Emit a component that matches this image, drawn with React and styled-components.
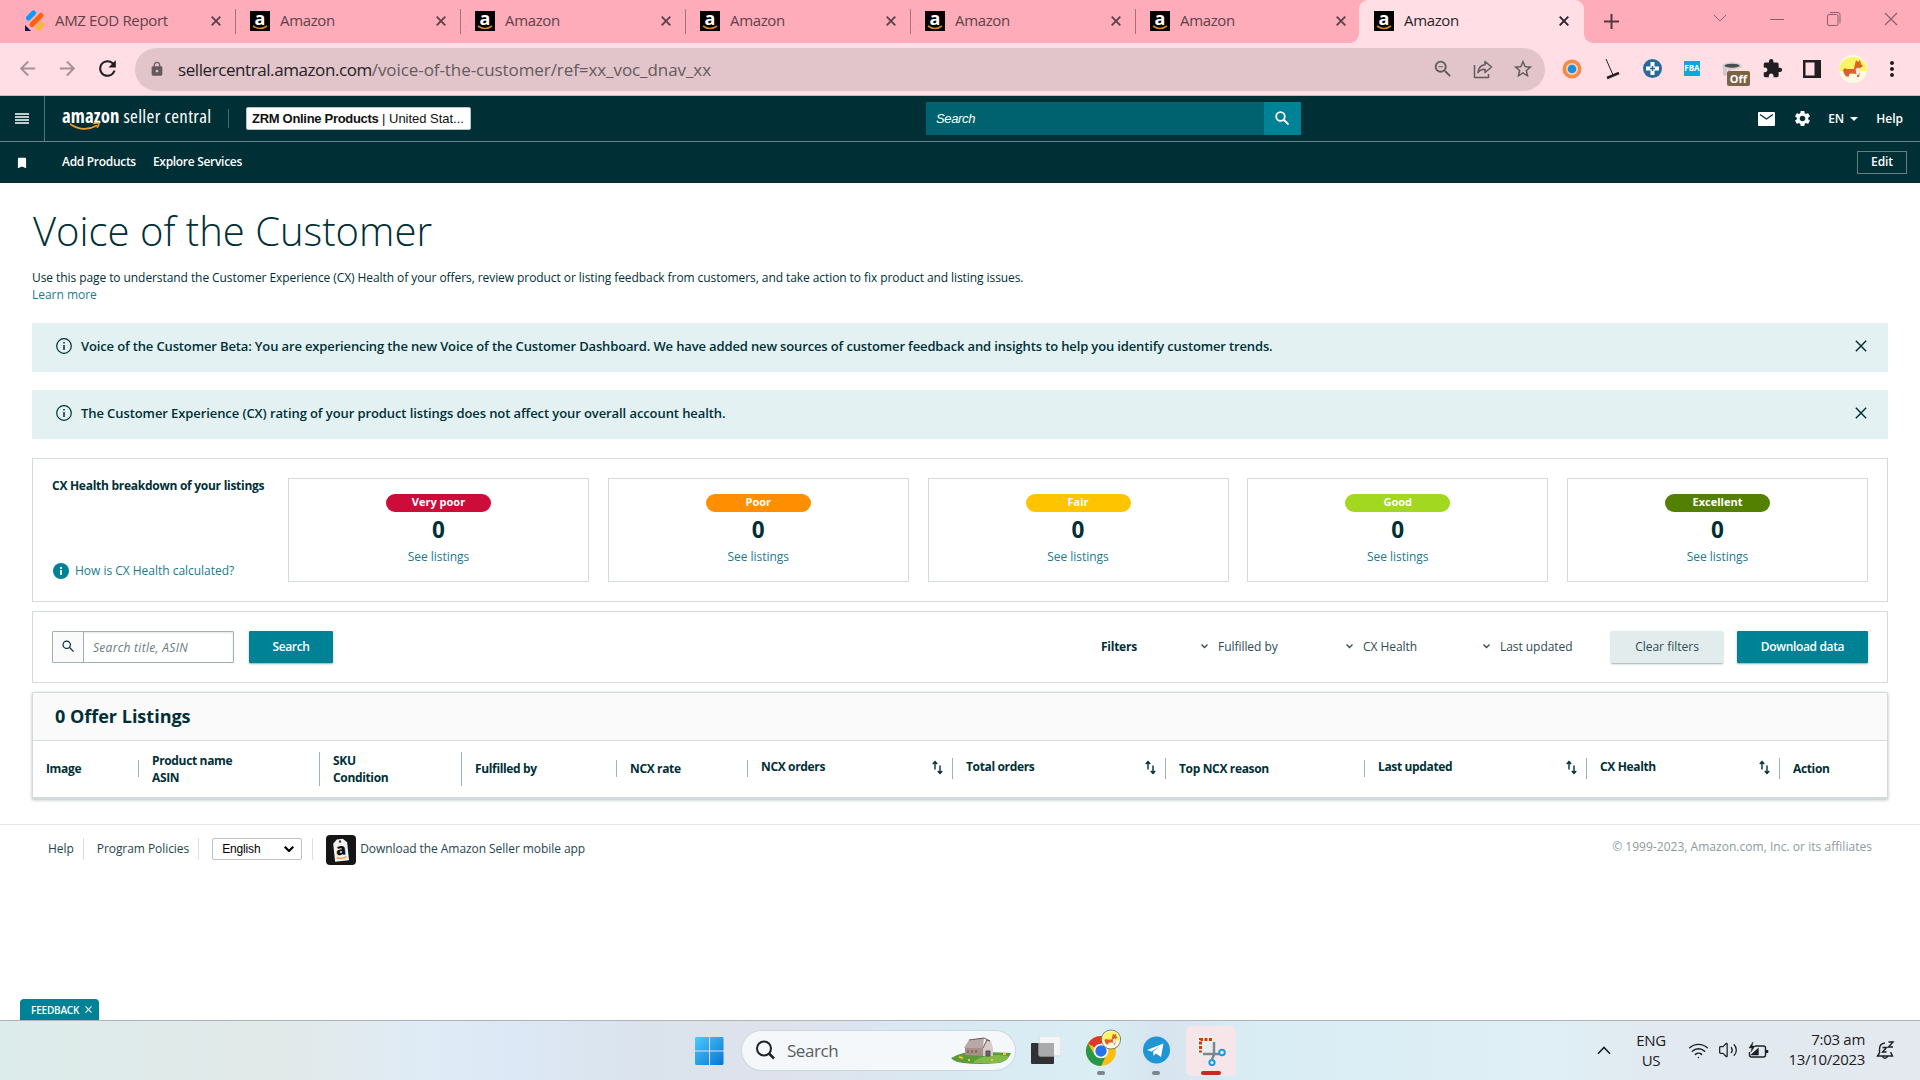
import React from "react";
import styled, { createGlobalStyle } from "styled-components";
import { Wifi, Volume2 } from "lucide-react";
import { MdLock, MdZoomOut, MdStarBorder, MdExtension, MdMoreVert, MdSettings, MdBookmark, MdRefresh, MdArrowBack, MdArrowForward } from "react-icons/md";

const GlobalStyle = createGlobalStyle`
	* {
		box-sizing: border-box;
	}

	body {
		margin: 0;
		background: #fff;
		color: #002f36;
		font-family: "Open Sans", "Noto Sans", sans-serif;
		font-size: 12px;
		overflow: hidden;
	}

	svg {
		display: block;
		flex: none;
	}
`;

const Screen = styled.div`
	display: flex;
	flex-direction: column;
	width: 1920px;
	height: 1080px;
`;

/* ---------- browser ---------- */

const TabStrip = styled.div`
	display: flex;
	height: 43px;
	padding-left: 10px;
	background: #ffacba;
`;

const TabItem = styled.div`
	display: flex;
	align-items: center;
	width: 225px;
	height: 43px;
	padding: 0 14px 2px 15px;
	position: relative;
	color: #5c4349;

	&::after {
		content: "";
		display: ${p => (p.$last ? "none" : "block")};
		position: absolute;
		right: -1px;
		top: 9px;
		width: 1px;
		height: 25px;
		background: #a5727c;
	}
`;

const ActiveTab = styled(TabItem)`
	background: #ffdfe5;
	border-radius: 9px 9px 0 0;
	color: #2b2327;
	margin-left: -1px;
	padding-right: 15px;

	&::before,
	&::after {
		content: "";
		display: block;
		position: absolute;
		top: auto;
		bottom: 0;
		width: 9px;
		height: 9px;
	}

	&::before {
		left: -9px;
		background: radial-gradient(circle at 0 0, transparent 8.5px, #ffdfe5 9px);
	}

	&::after {
		right: -9px;
		background: radial-gradient(circle at 100% 0, transparent 8.5px, #ffdfe5 9px);
	}
`;

const TabTitle = styled.span`
	flex: 1;
	margin-left: 10px;
	padding-bottom: 2px;
	font-size: 15px;
	letter-spacing: -0.35px;
`;

const Favicon = styled.div`
	width: 20px;
	height: 20px;
	background: #000;
	color: #fff;
	position: relative;
	font-weight: 700;
	font-size: 18px;
	line-height: 14px;
	text-align: center;

	svg {
		position: absolute;
		left: 2px;
		bottom: 1px;
	}
`;

const NewTab = styled.div`
	display: flex;
	align-items: center;
	padding-left: 20px;
	color: #54383f;
`;

const WindowButtons = styled.div`
	display: flex;
	align-items: center;
	gap: 43px;
	margin-left: auto;
	padding: 0 22px 6px 0;
	color: #8c5e68;
`;

const Toolbar = styled.div`
	display: flex;
	align-items: center;
	height: 53px;
	background: #ffdfe5;
	border-bottom: 1px solid #d2b8bd;
	color: #1f1f22;
`;

const NavButtons = styled.div`
	display: flex;
	align-items: center;
	justify-content: space-between;
	width: 135px;
	padding: 0 15px 2px 16px;
`;

const AddressBar = styled.div`
	display: flex;
	align-items: center;
	width: 1410px;
	height: 43px;
	padding: 0 11px 0 14px;
	border-radius: 22px;
	background: #e1c5ca;
	color: #65595d;
`;

const Url = styled.div`
	flex: 1;
	margin-left: 13px;
	font-size: 17px;
	letter-spacing: -0.075px;
	color: #655a5e;
`;

const Domain = styled.span`
	color: #252125;
	letter-spacing: -0.42px;
`;

const AddressIcons = styled.div`
	display: flex;
	align-items: center;
	gap: 19px;
`;

const Extensions = styled.div`
	display: flex;
	align-items: center;
	flex: 1;
	padding: 0 0 1px 18px;
`;

const ExtSlot = styled.div`
	display: flex;
	justify-content: center;
	position: relative;
	width: 40px;
	margin-left: ${p => p.$shift || 0}px;
`;

const FbaBadge = styled.div`
	width: 16px;
	height: 15px;
	background: #0ea5e0;
	color: #fff;
	font-size: 8px;
	font-weight: 700;
	line-height: 13px;
	text-align: center;
`;

const OffBadge = styled.span`
	position: absolute;
	left: 15px;
	top: 9px;
	width: 23px;
	height: 15px;
	border-radius: 2px;
	background: #7d6344;
	color: #fff;
	font-size: 11px;
	font-weight: 700;
	line-height: 15px;
	text-align: center;
`;

/* ---------- seller central header ---------- */

const Header = styled.header`
	background: #002f36;
	color: #fff;
`;

const HeaderRow = styled.div`
	display: flex;
	align-items: center;
	height: 46px;
	border-bottom: 1px solid #68868b;
`;

const MenuButton = styled.div`
	display: flex;
	align-items: center;
	width: 45px;
	height: 45px;
	padding-left: 15px;
	border-right: 1px solid #50737a;
`;

const Logo = styled.div`
	display: flex;
	width: 150px;
	margin-left: 17px;
	position: relative;
	font-size: 18.8px;
	font-stretch: 75%;
	line-height: 22px;
	white-space: nowrap;
	padding-bottom: 5px;

	svg {
		position: absolute;
		left: 7px;
		top: 17px;
	}
`;

const LogoBold = styled.b`
	letter-spacing: 0.1px;
	margin-right: 4px;
`;

const LogoLight = styled.span`
	letter-spacing: 0.34px;
`;

const HeaderRule = styled.div`
	width: 1px;
	height: 19px;
	margin: 0 17px 0 16px;
	background: #476a70;
`;

const StoreSelect = styled.div`
	width: 225px;
	height: 23px;
	padding-left: 5px;
	border: 1px solid #b5c4c6;
	border-radius: 2px;
	background: #fff;
	color: #111;
	font: 13px/21px "Liberation Sans", Arial, sans-serif;
	letter-spacing: -0.02px;
	white-space: nowrap;

	b {
		letter-spacing: -0.3px;
	}
`;

const HeaderSearch = styled.div`
	display: flex;
	width: 375px;
	height: 33px;
	margin-left: 455px;
	background: #00616f;
	font: italic 13px/33px "Liberation Sans", Arial, sans-serif;
	padding-left: 10px;
	letter-spacing: -0.35px;
`;

const HeaderSearchButton = styled.div`
	display: flex;
	align-items: center;
	justify-content: center;
	width: 37px;
	height: 33px;
	margin-left: auto;
	padding: 0 1px 1px 0;
	background: #008296;
`;

const HeaderTools = styled.div`
	display: flex;
	align-items: center;
	margin-left: auto;
	padding-right: 17px;
	font-weight: 600;
`;

const MailIcon = styled.svg`
	margin-right: 18px;
`;

const LanguageCode = styled.span`
	margin-left: 16px;
`;

const Caret = styled.i`
	border: 4px solid transparent;
	border-top-color: #fff;
	border-bottom: 0;
	margin: 1px 18px 0 6px;
`;

const Favorites = styled.nav`
	display: flex;
	align-items: center;
	height: 41px;
	padding: 0 13px 0 15px;
	font-weight: 600;
	letter-spacing: -0.3px;
`;

const FavLink = styled.a`
	margin-left: ${p => p.$gap}px;
	padding-bottom: 2px;
`;

const EditButton = styled.div`
	width: 50px;
	height: 23px;
	margin-left: auto;
	border: 1px solid #667f83;
	line-height: 20px;
	text-align: center;
	letter-spacing: -0.1px;
`;

/* ---------- page ---------- */

const Page = styled.main`
	flex: 1;
	display: flex;
	flex-direction: column;
`;

const Content = styled.div`
	width: 1856px;
	margin-left: 32px;
`;

const Title = styled.h1`
	margin: 18px 0 0 1px;
	font-size: 40px;
	font-weight: 300;
	line-height: 60px;
`;

const Description = styled.p`
	margin: 8px 0 20px;
	line-height: 17px;
	letter-spacing: -0.075px;
`;

const TextLink = styled.a`
	color: #217a8b;
	letter-spacing: -0.02px;
`;

const Alert = styled.div`
	display: flex;
	align-items: center;
	height: 49px;
	margin-bottom: 18px;
	padding: 0 21px 3px 24px;
	background: #e3f1f2;
	font-size: 13px;
	font-weight: 600;
	letter-spacing: ${p => p.$spacing}px;

	span {
		flex: 1;
		margin-left: 9px;
	}
`;

const Panels = styled.div`
	padding-top: 1px;
`;

const Panel = styled.section`
	display: flex;
	margin-bottom: 9px;
	border: 1px solid #d5dbdb;
	height: ${p => p.$height}px;
`;

const Summary = styled.div`
	display: flex;
	flex-direction: column;
	justify-content: space-between;
	width: 255px;
	padding: 18px 0 21px 19px;
	line-height: 18px;
`;

const SummaryTitle = styled.b`
	letter-spacing: -0.27px;
`;

const SummaryLink = styled.div`
	display: flex;
	align-items: center;
	gap: 6px;
	padding-left: 1px;
`;

const Cards = styled.div`
	flex: 1;
	display: grid;
	grid-template-columns: repeat(5, 301px);
	justify-content: space-between;
	padding: 19px 19px 0 0;
`;

const Card = styled.div`
	display: flex;
	flex-direction: column;
	align-items: center;
	height: 104px;
	padding-top: 15px;
	border: 1px solid #d5dbdb;
`;

const Pill = styled.div`
	width: 105px;
	height: 18px;
	border-radius: 9px;
	background: ${p => p.$color};
	color: #fff;
	font-size: 11px;
	font-weight: 700;
	line-height: 16px;
	text-align: center;
`;

const Count = styled.div`
	font-size: 22.5px;
	font-weight: 700;
	line-height: 30px;
	margin: 3px 0;
`;

const FilterRow = styled.div`
	flex: 1;
	display: flex;
	align-items: center;
	padding: 0 19px;
`;

const SearchField = styled.div`
	display: flex;
	width: 182px;
	height: 32px;
	border: 1px solid #9fb0b3;
	border-radius: 1px;
	color: #687b7e;
	font-style: italic;
	line-height: 32px;
	letter-spacing: 0.3px;
	white-space: nowrap;
	box-shadow: inset 0 1px 2px rgba(0, 47, 54, 0.12);
`;

const SearchAddon = styled.div`
	width: 31px;
	margin-right: 9px;
	padding: 8px 0 0 9px;
	border-right: 1px solid #9fb0b3;
	background: #fafafa;
	color: #002f36;
`;

const Button = styled.div`
	width: ${p => p.$width}px;
	height: 32px;
	margin-left: ${p => p.$gap}px;
	border-radius: 1px;
	background: ${p => (p.$primary ? "#008296" : "#e3eced")};
	color: ${p => (p.$primary ? "#fff" : "#2b4c53")};
	font-weight: ${p => (p.$primary ? 600 : 400)};
	line-height: 32px;
	letter-spacing: ${p => (p.$primary ? -0.35 : 0)}px;
	text-align: center;
	box-shadow: 0 1px 2px rgba(0, 47, 54, 0.4);
`;

const FilterLabel = styled.b`
	margin-left: auto;
	width: 100px;
	padding-bottom: 2px;
	letter-spacing: -0.25px;
`;

const Filter = styled.div`
	display: flex;
	align-items: center;
	gap: 10px;
	width: ${p => p.$width}px;
	padding-bottom: 1px;
	color: #2b4c53;
	letter-spacing: -0.05px;
`;

const Listings = styled.section`
	height: 107px;
	border: 1px solid #d5dbdb;
	border-bottom-width: 2px;
	box-shadow: 0 1px 3px rgba(0, 47, 54, 0.3);
`;

const ListingsTitle = styled.h2`
	height: 48px;
	margin: 0;
	padding-left: 22px;
	border-bottom: 1px solid #d5dbdb;
	background: #fafafa;
	font-size: 18px;
	font-weight: 700;
	line-height: 47px;
`;

const ColumnRow = styled.div`
	display: grid;
	grid-template-columns: 106px 181px 142px 155px 131px 205px 213px 199px 222px 193px 1fr;
	align-items: center;
	height: 55px;
`;

const Column = styled.div`
	display: flex;
	justify-content: space-between;
	height: ${p => (p.$sortable ? 21 : 17 * p.$lines)}px;
	padding: 0 9px 0 13px;
	border-right: ${p => (p.$last ? 0 : 1)}px solid #9fb0b3;
	font-weight: 700;
	line-height: 17px;
	letter-spacing: -0.35px;
	white-space: pre;
`;

const SortArrows = styled.svg`
	margin-top: 2px;
`;

/* ---------- page footer ---------- */

const Footer = styled.footer`
	display: flex;
	align-items: center;
	height: 49px;
	margin-top: 25px;
	padding: 0 48px 1px 48px;
	border-top: 1px solid #e7e7e7;
	letter-spacing: -0.06px;
	color: #1e464d;
`;

const FooterRule = styled.div`
	width: 1px;
	height: 22px;
	margin: 0 ${p => p.$right}px 0 ${p => p.$left}px;
	background: #dcdfdf;
`;

const LanguageSelect = styled.div`
	display: flex;
	align-items: center;
	justify-content: space-between;
	width: 90px;
	height: 22px;
	padding: 0 7px 0 9px;
	border: 1px solid #bfc2c2;
	border-radius: 2px;
	color: #000;
	font: 12px "Liberation Sans", Arial, sans-serif;
	letter-spacing: -0.15px;
`;

const AppIcon = styled.div`
	margin: 2px 4px 0 0;
`;

const Copyright = styled.span`
	margin-left: auto;
	padding-bottom: 4px;
	color: #8d9a9c;
	letter-spacing: 0.03px;
`;

const Feedback = styled.div`
	display: flex;
	align-items: center;
	gap: 6px;
	width: 79px;
	height: 21px;
	margin: auto 0 0 20px;
	padding: 1px 0 0 11px;
	border-radius: 4px 4px 0 0;
	background: #008296;
	color: #fff;
	font-size: 10px;
	font-weight: 600;
	letter-spacing: -0.2px;

	svg {
		margin-bottom: 2px;
	}
`;

/* ---------- taskbar ---------- */

const Taskbar = styled.div`
	display: flex;
	align-items: center;
	height: 60px;
	border-top: 1px solid #aeb4b8;
	background: linear-gradient(90deg, #dcecea 0, #e2e9e9 280px, #dfebf5 420px, #dce8f5 520px, #dae3ec 650px, #dfe2ed 780px, #d9e9f2 950px, #daeef4 1100px, #d8e4ef 1160px, #d9edf4 1260px, #dfeff5 1560px, #e2e9f0 1660px, #e3e9ef 1920px);
	color: #1d2022;
`;

const TaskIcons = styled.div`
	display: flex;
	align-items: center;
	height: 59px;
	margin-left: 695px;
`;

const TaskSearch = styled.div`
	display: flex;
	align-items: center;
	width: 273px;
	height: 39px;
	margin: 0 16px 0 18px;
	padding: 0 4px 0 13px;
	border-radius: 20px;
	background: #f4f8fb;
	box-shadow: 0 0 0 1px #cdd8df;
	color: #595d60;
	font-size: 17px;
	letter-spacing: -0.45px;

	span {
		flex: 1;
		margin-left: 12px;
		padding-bottom: 1px;
	}

	svg {
		margin-bottom: 1px;
	}
`;

const TaskItem = styled.div`
	display: flex;
	align-items: center;
	justify-content: center;
	position: relative;
	width: 50px;
	height: 50px;
	padding-bottom: 2px;
	margin-left: ${p => p.$gap}px;
	border-radius: 5px;
	background: ${p => (p.$active ? "#f6e5e9" : "none")};

	&::after {
		content: "";
		position: absolute;
		bottom: 1px;
		width: ${p => (p.$active ? 20 : 8)}px;
		height: 4px;
		border-radius: 2px;
		background: ${p => (p.$active ? "#c92a1e" : "#7d868c")};
	}
`;

const Tray = styled.div`
	display: flex;
	align-items: center;
	margin-left: auto;
	padding: 0 25px 1px 0;
	font-size: 15px;
	line-height: 20px;
	letter-spacing: -0.3px;
`;

const TrayLanguage = styled.div`
	width: 40px;
	margin: 0 17px 0 20px;
	padding-bottom: 1px;
	text-align: center;
`;

const TraySound = styled.div`
	margin: 0 10px 0 9px;
`;

const Clock = styled.div`
	width: 96px;
	margin-right: 11px;
	padding-bottom: 2px;
	text-align: right;
`;

/* ---------- drawings ---------- */

const Cross = ({ size, width = 1.5 }) => (
	<svg width={size} height={size} viewBox="0 0 10 10" stroke="currentColor" strokeWidth={width} fill="none">
		<path d="M.7.7l8.6 8.6M9.3.7L.7 9.3" />
	</svg>
);

const AmazonFavicon = () => (
	<Favicon>
		a
		<svg width="16" height="5" viewBox="0 0 16 5" fill="none" stroke="#d98618" strokeWidth="1.6">
			<path d="M1 1q7 5 14 0" />
		</svg>
	</Favicon>
);

const ReportFavicon = () => (
	<svg width="20" height="21" viewBox="0 0 20 21" strokeLinecap="round" strokeWidth="5">
		<path d="M3.500 8l5-5" stroke="#0a99ff" />
		<path d="M7 14.500L16 5.500" stroke="#ff6100" />
		<path d="M13.500 18l3-3" stroke="#ffb629" />
		<path d="M0 15v6h6z" fill="#0a1551" />
	</svg>
);

const Info = () => (
	<svg width="16" height="16" viewBox="0 0 16 16" fill="none" stroke="#002f36" strokeWidth="1.2">
		<circle cx="8" cy="8" r="7.300" />
		<path d="M8 7v5M8 4v1.500" strokeWidth="1.5" />
	</svg>
);

const InfoFilled = () => (
	<svg width="16" height="16" viewBox="0 0 16 16">
		<circle cx="8" cy="8" r="8" fill="#008296" />
		<path d="M8 7v5M8 4v2" stroke="#fff" strokeWidth="2" />
	</svg>
);

const SearchIcon = ({ size, width = 1.5 }) => (
	<svg width={size} height={size} viewBox="0 0 14 14" fill="none" stroke="currentColor" strokeWidth={width}>
		<circle cx="5.500" cy="5.500" r="4.300" />
		<path d="M8.500 8.500l5 5" />
	</svg>
);

const ChevronIcon = ({ width = 7, stroke = 1.3, up }) => (
	<svg width={width} height={width * 0.6} viewBox="0 0 10 6" fill="none" stroke="currentColor" strokeWidth={(stroke * 10) / width}>
		<path d={up ? "M.7 5.500L5 1l4.300 4.500" : "M.7.700L5 5 9.300.700"} />
	</svg>
);

const SortIcon = () => (
	<SortArrows width="11" height="15" viewBox="0 0 11 15" fill="none" stroke="#002f36" strokeWidth="1.4">
		<path d="M3 9.500V2M.8 4L3 1.500 5.200 4" />
		<path d="M8 5.500V13M5.800 11L8 13.500 10.200 11" />
	</SortArrows>
);

const ShareIcon = () => (
	<svg width="20" height="20" viewBox="0 0 20 20" fill="none" stroke="currentColor" strokeWidth="1.5" strokeLinejoin="round">
		<path d="M1.500 6v12.500h14V15" />
		<path d="M12 2.500l6.500 5.500-6.500 5.500v-3.300c-3.500 0-5.500 1-7 3.500.3-4.500 2.500-7.500 7-8z" />
	</svg>
);

const Corgi = ({ size }) => (
	<svg width={size} height={size} viewBox="0 0 28 28">
		<circle cx="14" cy="14" r="14" fill="#fcfbe3" />
		<path d="M0 16A14 14 0 0 1 28 16z" fill="#fbf566" />
		<path d="M4 15l2-2 2 1h7l1-5 1-4 2 2 2-2 1 4 2 2-3 2v5l-1 4h-2v-3l-6-.5-2 1v2H7l-2-3z" fill="#d9632a" />
		<path d="M17 14l3-1 1 3-1 3-2 1zM7 22.500h3M17 22.500h3" fill="#fbeee2" stroke="#fbeee2" strokeWidth=".8" />
	</svg>
);

const WindowsLogo = () => (
	<svg width="29" height="30" viewBox="0 0 30 30">
		<defs>
			<linearGradient id="win" x1="0" y1="0" x2="1" y2="1">
				<stop offset="0" stopColor="#4ccbfb" />
				<stop offset="1" stopColor="#0873d4" />
			</linearGradient>
		</defs>
		<path d="M0 2q0-1.500 1.500-1.500H14.500v14H0zM15.500.5H28q1.500 0 1.500 1.500v12.500h-14zM0 15.500h14.500v14H1.500Q0 29.500 0 28zM15.500 15.500h14V28q0 1.500-1.500 1.500H15.500z" fill="url(#win)" />
	</svg>
);

const Barn = () => (
	<svg width="60" height="27" viewBox="0 0 60 27">
		<path d="M0 21q14-8 36-6l24 1q-3 8-12 10-20 2-36 0Q3 25 0 21z" fill="#5c9b37" />
		<path d="M22 26q4-7 26-8l10 1q-4 6-12 7z" fill="#82b94a" />
		<path d="M14 11h19v8l-19-1z" fill="#a98e87" />
		<path d="M13 11l5-8 15-2-1 10z" fill="#b9a9a6" />
		<path d="M32 11l3-9 5 2 2 7v8h-10z" fill="#d7ccc8" />
		<path d="M18 3l15-2 6 3-3-1-4 8" fill="none" stroke="#6a5a5c" />
		<path d="M35 14h4v5h-4zM17 13v3M21 13v3M25 13v3" fill="#5d6a70" stroke="#5e484b" />
		<path d="M8 20l4 1M17 23h2M40 23h2M52 17h3" stroke="#f3c437" strokeWidth="2" />
	</svg>
);

const TaskView = () => (
	<svg width="30" height="29" viewBox="0 0 30 29">
		<rect y="7" width="23" height="21" rx="1" fill="#303133" />
		<rect x="8" y="0" width="22" height="20" rx="1" fill="#f3f5f6" stroke="#d4d9dc" />
		<rect x="8" y="7" width="15" height="13" fill="#a8aaab" />
	</svg>
);

const ChromeLogo = () => (
	<svg width="40" height="42" viewBox="0 0 40 42">
		<circle cx="20" cy="22" r="15" fill="#fbbf12" />
		<path d="M20 22L7 14.500A15 15 0 0 1 33 14.500H20z" fill="#dc3a2d" />
		<path d="M20 37A15 15 0 0 1 7 14.500l6.500 11.200L20 29l4 0z" fill="#27974a" />
		<circle cx="20" cy="22" r="7.300" fill="#fff" />
		<circle cx="20" cy="22" r="5.700" fill="#2773e8" />
		<circle cx="30" cy="10.500" r="10" fill="#77735a" />
		<svg x="20.800" y="1.300" width="18.400" height="18.400" viewBox="0 0 28 28"><Corgi size={28} /></svg>
	</svg>
);

const Telegram = () => (
	<svg width="28" height="28" viewBox="0 0 28 28">
		<circle cx="14.500" cy="14" r="13.500" fill="#1f95d4" />
		<path d="M5 14L21.500 7.500 19 21l-5-3.500-2.500 2.300-.3-4.300L18 10l-8.500 5.500z" fill="#fff" />
	</svg>
);

const Snip = () => (
	<svg width="30" height="32" viewBox="0 0 30 32" fill="none">
		<rect x="0" y="2" width="21" height="21" rx="2" fill="#e9edf0" />
		<path d="M16 5.500H4.500V18.500" stroke="#d83b01" strokeWidth="3" strokeDasharray="3 1.5" />
		<path d="M18 8v13l-2 4M7 20h16" stroke="#7f878c" strokeWidth="2.5" />
		<circle cx="26" cy="18.500" r="2.800" stroke="#1b9de2" strokeWidth="2" />
		<circle cx="16" cy="28.500" r="2.600" stroke="#1b9de2" strokeWidth="2" />
	</svg>
);

/* ---------- data ---------- */

const ratings = [
	{ label: "Very poor", color: "#cc0c39" },
	{ label: "Poor", color: "#ff8f00" },
	{ label: "Fair", color: "#ffc400" },
	{ label: "Good", color: "#a2d81f" },
	{ label: "Excellent", color: "#538000" },
];

const filters = [
	{ label: "Fulfilled by", width: 145 },
	{ label: "CX Health", width: 137 },
	{ label: "Last updated", width: 128 },
];

const columns = [
	{ label: "Image" },
	{ label: "Product name\nASIN", lines: 2 },
	{ label: "SKU\nCondition", lines: 2 },
	{ label: "Fulfilled by" },
	{ label: "NCX rate" },
	{ label: "NCX orders", sortable: true },
	{ label: "Total orders", sortable: true },
	{ label: "Top NCX reason" },
	{ label: "Last updated", sortable: true },
	{ label: "CX Health", sortable: true },
	{ label: "Action" },
];

const Browser = () => (
	<>
		<TabStrip>
			<TabItem>
				<ReportFavicon />
				<TabTitle>AMZ EOD Report</TabTitle>
				<Cross size={10} width={1.9} />
			</TabItem>
			{[1, 2, 3, 4, 5].map(i => (
				<TabItem key={i} $last={i === 5}>
					<AmazonFavicon />
					<TabTitle>Amazon</TabTitle>
					<Cross size={10} width={1.9} />
				</TabItem>
			))}
			<ActiveTab>
				<AmazonFavicon />
				<TabTitle>Amazon</TabTitle>
				<Cross size={10} width={1.9} />
			</ActiveTab>
			<NewTab>
				<svg width="15" height="15" viewBox="0 0 15 15" stroke="currentColor" strokeWidth="2"><path d="M7.500 0v15M0 7.500h15" /></svg>
			</NewTab>
			<WindowButtons>
				<ChevronIcon width={14} stroke={1} />
				<svg width="14" height="14" stroke="currentColor"><path d="M0 7.500h14" /></svg>
				<svg width="14" height="14" fill="none" stroke="currentColor">
					<rect x=".5" y="2.500" width="10.500" height="11" rx="1.500" />
					<path d="M3 .5h8q2 0 2 2v9" />
				</svg>
				<Cross size={14} width={0.8} />
			</WindowButtons>
		</TabStrip>
		<Toolbar>
			<NavButtons>
				<MdArrowBack size={23} color="#a58f94" />
				<MdArrowForward size={23} color="#a58f94" />
				<MdRefresh size={25} />
			</NavButtons>
			<AddressBar>
				<MdLock size={16} />
				<Url><Domain>sellercentral.amazon.com</Domain>/voice-of-the-customer/ref=xx_voc_dnav_xx</Url>
				<AddressIcons>
					<MdZoomOut size={22} />
					<ShareIcon />
					<MdStarBorder size={22} />
				</AddressIcons>
			</AddressBar>
			<Extensions>
				<ExtSlot $shift={-11}>
					<svg width="20" height="20" viewBox="0 0 20 20">
						<circle cx="10" cy="10" r="9.500" fill="#f58a45" />
						<circle cx="10" cy="10" r="6" fill="#f7d4b8" />
						<circle cx="10" cy="10" r="4.300" fill="#1e8fe0" />
					</svg>
				</ExtSlot>
				<ExtSlot>
					<svg width="16" height="22" viewBox="0 0 16 22" stroke="#222">
						<path d="M2 1l7 16" />
						<path d="M3 20l12-5" strokeWidth="2.5" />
					</svg>
				</ExtSlot>
				<ExtSlot>
					<svg width="19" height="19" viewBox="0 0 19 19">
						<circle cx="9.500" cy="9.500" r="9.500" fill="#286b9a" />
						<path d="M7.500 3h4v4.500H16v4h-4.500V16h-4v-4.500H3v-4h4.500z" fill="#fff" />
						<path d="M9.500 7v5M7 9.500h5" stroke="#286b9a" strokeWidth="1.5" />
					</svg>
				</ExtSlot>
				<ExtSlot><FbaBadge>FBA</FbaBadge></ExtSlot>
				<ExtSlot>
					<svg width="20" height="14" viewBox="0 0 20 14">
						<path d="M2 5v8h2V6M7 6v6" stroke="#b8b0b2" fill="none" />
						<ellipse cx="10" cy="4" rx="10" ry="3.700" fill="#cfcdce" />
						<ellipse cx="10" cy="3.700" rx="7.500" ry="2" fill="#4b4c50" />
					</svg>
					<OffBadge>Off</OffBadge>
				</ExtSlot>
				<ExtSlot><MdExtension size={21} /></ExtSlot>
				<ExtSlot>
					<svg width="18" height="18" viewBox="0 0 18 18">
						<path d="M0 0h18v18H0zM2.500 2.500v13h9v-13z" fill="currentColor" fillRule="evenodd" />
					</svg>
				</ExtSlot>
				<ExtSlot $shift={1}><Corgi size={28} /></ExtSlot>
				<ExtSlot $shift={-1}><MdMoreVert size={24} /></ExtSlot>
			</Extensions>
		</Toolbar>
	</>
);

const SellerHeader = () => (
	<Header>
		<HeaderRow>
			<MenuButton>
				<svg width="14" height="11" viewBox="0 0 14 11" stroke="#fff" strokeWidth="1.3"><path d="M0 1h14M0 4h14M0 7h14M0 10h14" /></svg>
			</MenuButton>
			<Logo>
				<LogoBold>amazon</LogoBold>
				<LogoLight>seller central</LogoLight>
				<svg width="32" height="9" viewBox="0 0 32 9" fill="none" stroke="#f29a2e" strokeWidth="1.6">
					<path d="M1 2q13 9 27 1.500M24 1.500q5-1 6-.3 0 2-2 4.500" />
				</svg>
			</Logo>
			<HeaderRule />
			<StoreSelect><b>ZRM Online Products</b> | United Stat...</StoreSelect>
			<HeaderSearch>
				Search
				<HeaderSearchButton><SearchIcon size={14} width={1.8} /></HeaderSearchButton>
			</HeaderSearch>
			<HeaderTools>
				<MailIcon width="17" height="14" viewBox="0 0 17 14">
					<rect width="17" height="14" rx="1" fill="#fff" />
					<path d="M2 2.500l6.500 4.500L15 2.500" fill="none" stroke="#002f36" strokeWidth="1.3" />
				</MailIcon>
				<MdSettings size={19} />
				<LanguageCode>EN</LanguageCode>
				<Caret />
				Help
			</HeaderTools>
		</HeaderRow>
		<Favorites>
			<MdBookmark size={14} />
			<FavLink $gap={33}>Add Products</FavLink>
			<FavLink $gap={17}>Explore Services</FavLink>
			<EditButton>Edit</EditButton>
		</Favorites>
	</Header>
);

const SellerFooter = () => (
	<Footer>
		<span>Help</span>
		<FooterRule $left={9} $right={13} />
		<span>Program Policies</span>
		<FooterRule $left={9} $right={13} />
		<LanguageSelect>English <ChevronIcon width={10} stroke={2.2} /></LanguageSelect>
		<FooterRule $left={10} $right={13} />
		<AppIcon>
			<svg width="30" height="30" viewBox="0 0 30 30">
				<rect width="30" height="30" rx="4" fill="#151515" />
				<g transform="rotate(-6 15 16)">
					<path d="M8 8l4-4h6l4 4v18H8z" fill="#f2f2f2" />
					<circle cx="15" cy="6.500" r="1.200" fill="#333" />
					<path d="M10 22q5 3 10 0" fill="none" stroke="#f7a63e" strokeWidth="1.5" />
					<text x="15" y="20" textAnchor="middle" fontSize="16" fontWeight="800" fill="#111">a</text>
				</g>
			</svg>
		</AppIcon>
		<span>Download the Amazon Seller mobile app</span>
		<Copyright>© 1999-2023, Amazon.com, Inc. or its affiliates</Copyright>
	</Footer>
);

const WindowsTaskbar = () => (
	<Taskbar>
		<TaskIcons>
			<WindowsLogo />
			<TaskSearch>
				<svg width="20" height="20" viewBox="0 0 20 20" fill="none" stroke="#222" strokeWidth="2">
					<circle cx="9" cy="8.500" r="7" />
					<path d="M14 13.500l5 5" strokeWidth="2.5" />
				</svg>
				<span>Search</span>
				<Barn />
			</TaskSearch>
			<TaskView />
			<TaskItem $gap={15}><ChromeLogo /></TaskItem>
			<TaskItem $gap={5}><Telegram /></TaskItem>
			<TaskItem $gap={5} $active><Snip /></TaskItem>
		</TaskIcons>
		<Tray>
			<ChevronIcon width={14} stroke={1.6} up />
			<TrayLanguage>ENG US</TrayLanguage>
			<Wifi size={21} strokeWidth={1.7} />
			<TraySound><Volume2 size={20} strokeWidth={1.5} /></TraySound>
			<svg width="21" height="17" viewBox="0 0 21 17" fill="none" stroke="#1d2022" strokeWidth="1.4">
				<path d="M7 4h8.500q2 0 2 2v7q0 2-2 2h-12q-2 0-2-2v-3" />
				<path d="M4 12.500L10 7v5.500z" fill="#1d2022" />
				<path d="M19 8v3" strokeWidth="2.5" />
				<path d="M5 0L1 6h3L3 10l4-6H4z" fill="#1d2022" strokeWidth=".5" />
			</svg>
			<Clock>7:03 am 13/10/2023</Clock>
			<svg width="19" height="19" viewBox="0 0 19 19" fill="none" stroke="#1d2022" strokeWidth="1.4">
				<path d="M9 2Q3.500 2.500 3.500 8v4L1.500 15h15l-1.500-3v-1M6.500 15.500q2 3.500 5 0" />
				<path d="M6.500 6.500h4l-4 4.500h4M12.500 1h4.500l-4.500 5H17" />
			</svg>
		</Tray>
	</Taskbar>
);

const App = () => {
	return (
		<Screen>
			<GlobalStyle />
			<Browser />
			<SellerHeader />
			<Page>
				<Content>
					<Title>Voice of the Customer</Title>
					<Description>
						Use this page to understand the Customer Experience (CX) Health of your offers, review product or listing feedback from customers, and take action to fix product and listing issues.
						<br />
						<TextLink>Learn more</TextLink>
					</Description>
					<Alert $spacing={-0.14}>
						<Info />
						<span>Voice of the Customer Beta: You are experiencing the new Voice of the Customer Dashboard. We have added new sources of customer feedback and insights to help you identify customer trends.</span>
						<Cross size={12} width={1.2} />
					</Alert>
					<Alert $spacing={-0.09}>
						<Info />
						<span>The Customer Experience (CX) rating of your product listings does not affect your overall account health.</span>
						<Cross size={12} width={1.2} />
					</Alert>
					<Panels>
						<Panel $height={144}>
							<Summary>
								<SummaryTitle>CX Health breakdown of your listings</SummaryTitle>
								<SummaryLink><InfoFilled /><TextLink>How is CX Health calculated?</TextLink></SummaryLink>
							</Summary>
							<Cards>
								{ratings.map(r => (
									<Card key={r.label}>
										<Pill $color={r.color}>{r.label}</Pill>
										<Count>0</Count>
										<TextLink>See listings</TextLink>
									</Card>
								))}
							</Cards>
						</Panel>
						<Panel $height={72}>
							<FilterRow>
								<SearchField>
									<SearchAddon><SearchIcon size={12} width={1.4} /></SearchAddon>
									Search title, ASIN
								</SearchField>
								<Button $primary $width={84} $gap={15}>Search</Button>
								<FilterLabel>Filters</FilterLabel>
								{filters.map(f => (
									<Filter key={f.label} $width={f.width}><ChevronIcon width={7} />{f.label}</Filter>
								))}
								<Button $width={112} $gap={0}>Clear filters</Button>
								<Button $primary $width={131} $gap={14}>Download data</Button>
							</FilterRow>
						</Panel>
						<Listings>
							<ListingsTitle>0 Offer Listings</ListingsTitle>
							<ColumnRow>
								{columns.map((c, i) => (
									<Column key={c.label} $lines={c.lines || 1} $sortable={c.sortable} $last={i === columns.length - 1}>
										{c.label}
										{c.sortable && <SortIcon />}
									</Column>
								))}
							</ColumnRow>
						</Listings>
					</Panels>
				</Content>
				<SellerFooter />
				<Feedback>FEEDBACK <Cross size={7} /></Feedback>
			</Page>
			<WindowsTaskbar />
		</Screen>
	);
};

export default App;
